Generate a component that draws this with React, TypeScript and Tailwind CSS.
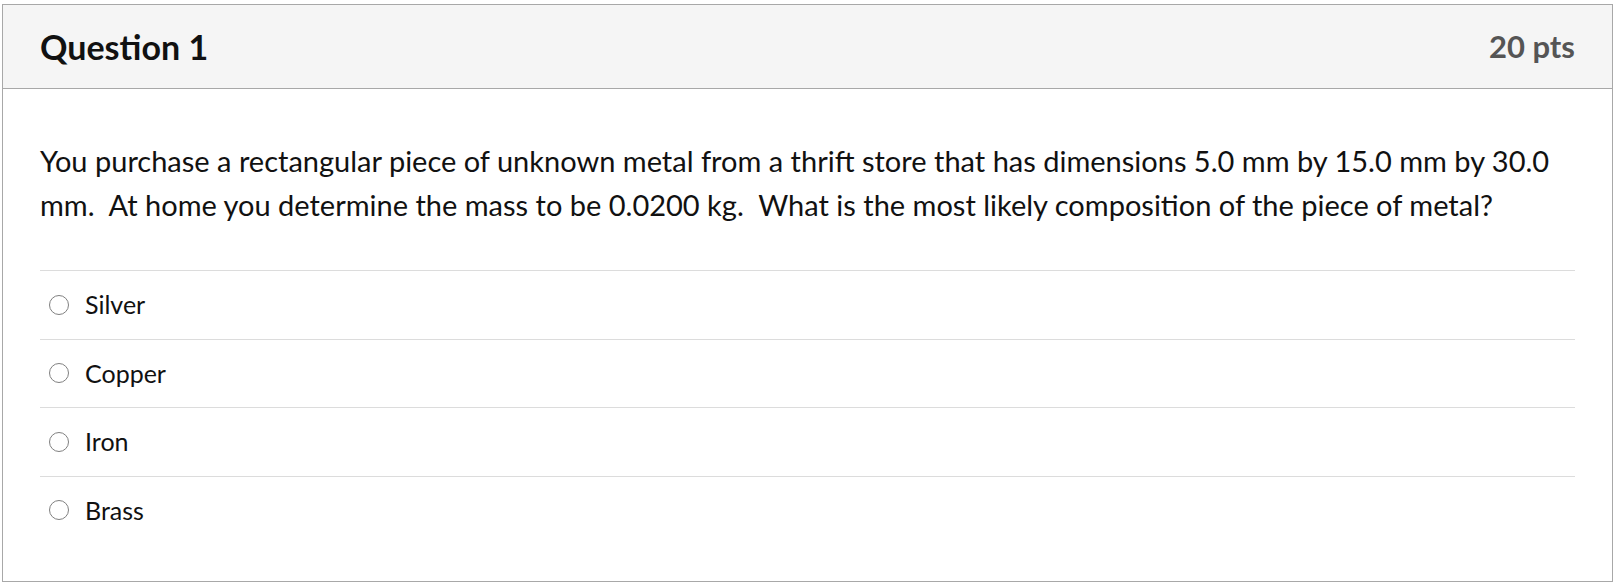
import React from 'react'

const answers = ['Silver', 'Copper', 'Iron', 'Brass']

export default function App() {
  return (
    <div className="w-[1618px] h-[588px] bg-white pt-[4px] pl-[2px]" style={{ fontFamily: 'Lato, "Noto Sans", sans-serif' }}>
      <div className="w-[1611px] h-[578px] border border-[#a8a8a8] flex flex-col">
        <div className="h-[84px] bg-[#f5f5f5] border-b border-[#a8a8a8] flex items-center justify-between px-[37px]">
          <h2 className="text-[34px] font-bold text-[#111]">Question 1</h2>
          <div className="text-[31px] font-bold text-[#555]">20 pts</div>
        </div>
        <div className="px-[37px] pt-[50px]">
          <p className="text-[29px] leading-[44px] text-[#111]">
            You purchase a rectangular piece of unknown metal from a thrift store that has dimensions 5.0 mm by 15.0 mm by 30.0 mm.&nbsp; At home you determine the mass to be 0.0200 kg.&nbsp; What is the most likely composition of the piece of metal?
          </p>
          <div className="mt-[43px]">
            {answers.map((a) => (
              <label key={a} className="flex items-center h-[68.5px] border-t border-[#dcdcdc]">
                <span className="ml-[9px] w-[20px] h-[20px] rounded-full border-[1.5px] border-[#808080] bg-white" />
                <span className="ml-[16px] text-[25px] text-[#111]">{a}</span>
              </label>
            ))}
          </div>
        </div>
      </div>
    </div>
  )
}
